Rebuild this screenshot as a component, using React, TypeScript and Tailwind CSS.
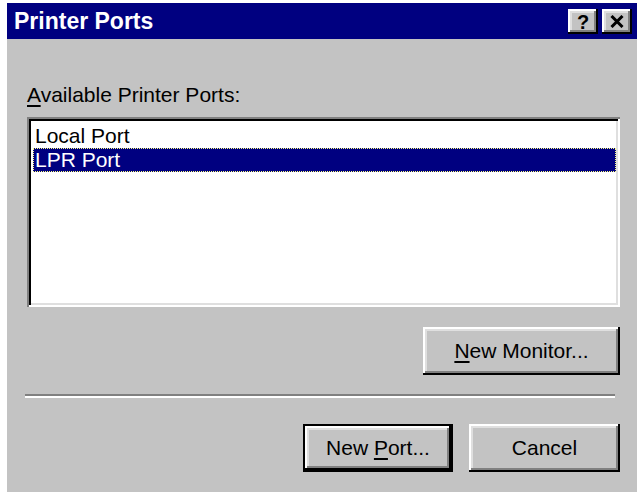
const bevelBtn =
  'bg-[#c3c3c3] shadow-[inset_-2px_-2px_0_#000,inset_2px_2px_0_#fff,inset_-4px_-4px_0_#808080,inset_4px_4px_0_#dfdfdf]';

function TitleButton({ children }: { children: React.ReactNode }) {
  return (
    <div className={`w-[30px] h-[25px] flex items-center justify-center ${bevelBtn}`}>
      {children}
    </div>
  );
}

function DialogButton({
  children,
  width,
  isDefault = false,
}: {
  children: React.ReactNode;
  width: string;
  isDefault?: boolean;
}) {
  if (isDefault) {
    return (
      <div className={`${width} h-[48px] border-2 border-black flex`}>
        <div className={`flex-1 flex items-center justify-center text-[21px] text-black ${bevelBtn}`}>
          {children}
        </div>
      </div>
    );
  }
  return (
    <div className={`${width} h-[48px] flex items-center justify-center text-[21px] text-black ${bevelBtn}`}>
      {children}
    </div>
  );
}

export default function App() {
  return (
    <div
      className="w-[637px] h-[492px] bg-white pl-[7px] pt-[3px] overflow-hidden"
      style={{ fontFamily: '"Liberation Sans", Arial, sans-serif' }}
    >
      <div className="h-full bg-[#c3c3c3] flex flex-col">
        {/* title bar */}
        <div className="h-[36px] bg-[#000080] flex items-center justify-between pl-[7px] pr-[5px]">
          <span className="text-white font-bold text-[23px] leading-none">Printer Ports</span>
          <div className="flex gap-[4px]">
            <TitleButton>
              <span className="font-bold text-[20px] leading-none text-black mt-[1px]">?</span>
            </TitleButton>
            <TitleButton>
              <svg width="14" height="13" viewBox="0 0 14 13">
                <path d="M1.5 1 L12.5 12 M12.5 1 L1.5 12" stroke="#000" strokeWidth="3" />
              </svg>
            </TitleButton>
          </div>
        </div>

        {/* body */}
        <div className="flex flex-col pl-[20px] pr-[17px]">
          <div className="mt-[44px] text-[21px] leading-[24px] text-black">
            <u className="underline-offset-[3px]">A</u>vailable Printer Ports:
          </div>

          <div className="mt-[10px] h-[190px] bg-white shadow-[inset_2px_2px_0_#808080,inset_-2px_-2px_0_#fff,inset_4px_4px_0_#000,inset_-4px_-4px_0_#dfdfdf] pt-[7px] pl-[6px] pr-[4px]">
            <div className="h-[24px] flex items-center pl-[2px] text-[21px] text-black">Local Port</div>
            <div className="h-[24px] flex items-center pl-[1px] text-[21px] text-white bg-[#000080] border border-dotted border-[#ffff80]">
              LPR Port
            </div>
          </div>

          <div className="mt-[20px] flex justify-end">
            <DialogButton width="w-[197px]">
              <span>
                <u className="underline-offset-[3px]">N</u>ew Monitor...
              </span>
            </DialogButton>
          </div>
        </div>

        <div className="mt-[19px] ml-[18px] mr-[22px] flex flex-col">
          <div className="h-[2px] bg-[#808080]" />
          <div className="h-[2px] bg-white" />
        </div>

        <div className="mt-[26px] flex justify-end gap-[16px] pr-[17px]">
          <DialogButton width="w-[150px]" isDefault>
            <span>
              New <u className="underline-offset-[3px]">P</u>ort...
            </span>
          </DialogButton>
          <DialogButton width="w-[151px]">Cancel</DialogButton>
        </div>
      </div>
    </div>
  );
}
